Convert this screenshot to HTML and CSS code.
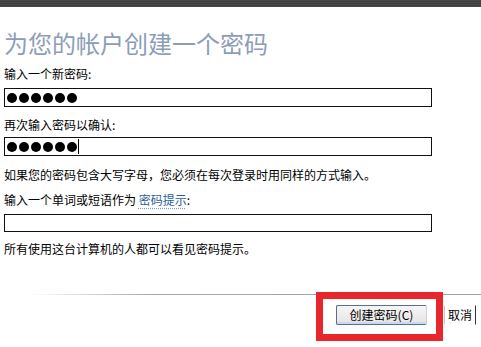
FILE: index.html
```html
<!DOCTYPE html>
<html lang="zh-CN">
<head>
<meta charset="utf-8">
<link rel="stylesheet" href="styles.css">
</head>
<body>
<div class="topbar"></div>
<main class="content">
  <h1 class="title">为您的帐户创建一个密码</h1>
  <label class="label l1">输入一个新密码:</label>
  <div class="field f1"><span class="dot"></span><span class="dot"></span><span class="dot"></span><span class="dot"></span><span class="dot"></span><span class="dot"></span></div>
  <label class="label l2">再次输入密码以确认:</label>
  <div class="field f2"><span class="dot"></span><span class="dot"></span><span class="dot"></span><span class="dot"></span><span class="dot"></span><span class="dot"></span><span class="caret"></span></div>
  <p class="label para">如果您的密码包含大写字母，您必须在每次登录时用同样的方式输入。</p>
  <label class="label l3">输入一个单词或短语作为 <span class="link">密码提示</span>:</label>
  <div class="field f3"></div>
  <p class="label note">所有使用这台计算机的人都可以看见密码提示。</p>
</main>
<div class="separator"></div>
<div class="footer">
  <div class="btn primary">创建密码(C)</div>
  <div class="btn cancel">取消</div>
</div>
<div class="highlight"></div>
</body>
</html>
```
FILE: styles.css
```css
html, body {
  margin: 0;
  padding: 0;
  background: #ffffff;
}
body {
  width: 481px;
  height: 347px;
  overflow: hidden;
  position: relative;
  font-family: "Noto Sans CJK SC", "Noto Sans", sans-serif;
  font-size: 12px;
  color: #000;
}
.topbar {
  height: 7px;
  background: repeating-linear-gradient(to bottom, #4a4a4a 0, #4a4a4a 1px, #3c3c3c 1px, #3c3c3c 2px);
}
.content {
  display: flex;
  flex-direction: column;
  padding-left: 4px;
}
.title {
  margin: 22px 0 0 0;
  font-size: 24px;
  line-height: 28px;
  font-weight: normal;
  color: #8d9db9;
}
.label {
  margin: 0;
  line-height: 16px;
  display: block;
}
.l1 { margin-top: 9px; }
.l2 { margin-top: 10px; }
.para { margin-top: 11px; }
.l3 { margin-top: 9px; }
.note { margin-top: 9px; }
.link {
  color: #2a5d9a;
  text-decoration: underline dotted #7f9cc0;
  text-underline-offset: 3px;
}
.field {
  box-sizing: border-box;
  width: 428px;
  height: 19px;
  border: 1px solid #111;
  display: flex;
  align-items: center;
  padding-left: 2px;
  gap: 2px;
}
.f1 { margin-top: 6px; }
.f2 { margin-top: 4px; }
.f3 { margin-top: 6px; height: 18px; }
.dot {
  width: 10px;
  height: 10px;
  border-radius: 50%;
  background: #000;
}
.caret {
  width: 1px;
  height: 15px;
  background: #000;
  margin-left: -1px;
}
.separator {
  margin-top: 37px;
  margin-left: 30px;
  height: 1px;
  background: linear-gradient(to right, rgba(160,160,160,0), #a8a8a8 120px, #a0a0a0);
}
.footer {
  display: flex;
  justify-content: flex-end;
  align-items: center;
  margin-top: 10px;
  padding-right: 5px;
  gap: 17px;
}
.btn {
  box-sizing: border-box;
  height: 20px;
  line-height: 18px;
  text-align: center;
  border: 1px solid #8a8a8a;
  border-radius: 2px;
  background: linear-gradient(to bottom, #f6f6f6, #e4e4e4);
}
.primary {
  width: 91px;
  border-color: #5c6f86 #d0d0d0 #5c6f86 #5c6f86;
  box-shadow: inset 0 -2px 0 #c9daf0;
}
.cancel {
  width: 32px;
  border-color: transparent #333 transparent #c8c8c8;
  border-radius: 0;
  background: #fff;
}
.highlight {
  position: absolute;
  left: 316px;
  top: 292px;
  width: 127px;
  height: 49px;
  box-sizing: border-box;
  border: 7px solid #e8262b;
}
```
